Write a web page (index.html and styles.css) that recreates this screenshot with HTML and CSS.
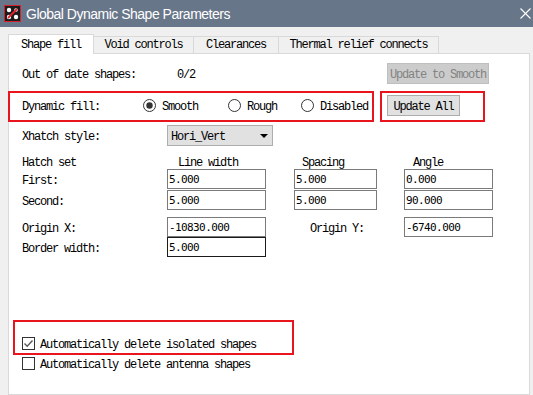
FILE: index.html
```html
<!DOCTYPE html>
<html>
<head>
    <link rel="stylesheet" href="styles.css">
</head>
<body>

    <div class="titlebar">
        <svg class="app-icon" viewBox="0 0 17 17">
            <rect x="0.5" y="0.5" width="16" height="16" fill="#1c1c1c" stroke="#d3202b"/>
            <circle cx="5" cy="5" r="2.2" fill="#fff"/>
            <circle cx="12" cy="5" r="1.8" fill="#fff"/>
            <circle cx="5" cy="12" r="2.2" fill="#fff"/>
            <circle cx="12" cy="12" r="2.2" fill="#fff"/>
            <line x1="4" y1="13" x2="13" y2="4" stroke="#e3222c" stroke-width="1.8"/>
        </svg>
        <span class="title">Global Dynamic Shape Parameters</span>
        <svg class="close" viewBox="0 0 11 11">
            <line x1="0.5" y1="0.5" x2="10.5" y2="10.5" stroke="#fff" stroke-width="1.1"/>
            <line x1="10.5" y1="0.5" x2="0.5" y2="10.5" stroke="#fff" stroke-width="1.1"/>
        </svg>
    </div>

    <div class="tabs">
        <div class="tab active t-shape">Shape fill</div>
        <div class="tab t-void">Void controls</div>
        <div class="tab t-clear">Clearances</div>
        <div class="tab t-thermal">Thermal relief connects</div>
    </div>

    <div class="panel">
        <div class="row row-status">
            <span class="lbl lbl-status">Out of date shapes:</span>
            <span class="lbl count">0/2</span>
            <button class="btn btn-disabled">Update to Smooth</button>
        </div>

        <div class="row row-fill">
            <span class="lbl lbl-fill">Dynamic fill:</span>
            <label class="radio r-smooth">
                <svg class="dot" viewBox="0 0 13 13"><circle cx="6.5" cy="6.5" r="6" fill="#fff" stroke="#333"/><circle cx="6.5" cy="6.5" r="3.2" fill="#333"/></svg>
                <span class="lbl">Smooth</span>
            </label>
            <label class="radio r-rough">
                <svg class="dot" viewBox="0 0 13 13"><circle cx="6.5" cy="6.5" r="6" fill="#fff" stroke="#333"/></svg>
                <span class="lbl">Rough</span>
            </label>
            <label class="radio r-disabled">
                <svg class="dot" viewBox="0 0 13 13"><circle cx="6.5" cy="6.5" r="6" fill="#fff" stroke="#333"/></svg>
                <span class="lbl">Disabled</span>
            </label>
            <button class="btn btn-update">Update All</button>
        </div>

        <div class="row row-xhatch">
            <span class="lbl lbl-xhatch">Xhatch style:</span>
            <div class="select">
                <span class="lbl">Hori_Vert</span>
                <span class="caret"></span>
            </div>
        </div>

        <div class="hrow hrow-head">
            <span class="lbl c0">Hatch set</span>
            <span class="lbl c1 head-lw">Line width</span>
            <span class="lbl c2 head-sp">Spacing</span>
            <span class="lbl c3 head-an">Angle</span>
        </div>
        <div class="hrow hrow-first">
            <span class="lbl c0">First:</span>
            <span class="c1"><input class="field w1" value="5.000"></span>
            <span class="c2"><input class="field w2" value="5.000"></span>
            <span class="c3"><input class="field w3" value="0.000"></span>
        </div>
        <div class="hrow hrow-second">
            <span class="lbl c0">Second:</span>
            <span class="c1"><input class="field w1" value="5.000"></span>
            <span class="c2"><input class="field w2" value="5.000"></span>
            <span class="c3"><input class="field w3" value="90.000"></span>
        </div>
        <div class="hrow hrow-origin">
            <span class="lbl c0">Origin X:</span>
            <span class="c1"><input class="field w1" value="-10830.000"></span>
            <span class="lbl c2 lbl-oy">Origin Y:</span>
            <span class="c3"><input class="field w3" value="-6740.000"></span>
        </div>
        <div class="hrow hrow-border">
            <span class="lbl c0">Border width:</span>
            <span class="c1"><input class="field w1 focused" value="5.000"></span>
        </div>

        <label class="check check-isolated">
            <svg class="box" viewBox="0 0 13 13"><rect x="0.5" y="0.5" width="12" height="12" fill="#fff" stroke="#333"/><polyline points="2.5,6.5 5.2,9.2 10.5,3.5" fill="none" stroke="#5a5a5a" stroke-width="1.4"/></svg>
            <span class="lbl">Automatically delete isolated shapes</span>
        </label>
        <label class="check check-antenna">
            <svg class="box" viewBox="0 0 13 13"><rect x="0.5" y="0.5" width="12" height="12" fill="#fff" stroke="#333"/></svg>
            <span class="lbl">Automatically delete antenna shapes</span>
        </label>

        <div class="mark mark-fill"></div>
        <div class="mark mark-update"></div>
        <div class="mark mark-isolated"></div>
    </div>

</body>
</html>
```

FILE: styles.css
```css
body {
    margin: 0;
    background-color: #f0f0f0;
    font-family: "Liberation Mono", "DejaVu Sans Mono", monospace;
    font-size: 12px;
    letter-spacing: -1.2px;
    color: #000;
    overflow: hidden;
}

.titlebar {
    height: 27px;
    background-color: #687689;
    display: flex;
    align-items: center;
    padding-left: 4px;
}

.app-icon {
    width: 17px;
    height: 17px;
}

.title {
    margin-left: 5px;
    color: #fff;
    font-family: "Liberation Sans", Arial, sans-serif;
    font-size: 14px;
    letter-spacing: -0.5px;
}

.close {
    width: 11px;
    height: 11px;
    margin-left: auto;
    margin-right: 2px;
}

.tabs {
    display: flex;
    align-items: flex-end;
    height: 26px;
    padding-left: 8px;
}

.tab {
    box-sizing: border-box;
    height: 17px;
    line-height: 17px;
    border: 1px solid #d9d9d9;
    border-bottom: none;
    margin-right: -1px;
    text-align: center;
}

.tab.active {
    height: 20px;
    line-height: 20px;
    background-color: #fff;
    margin-bottom: -1px;
    position: relative;
    z-index: 1;
}

.t-shape { width: 86px; }
.t-void { width: 101px; }
.t-clear { width: 86px; }
.t-thermal { width: 161px; }

.panel {
    box-sizing: border-box;
    position: relative;
    width: 522px;
    height: 342px;
    margin-left: 8px;
    padding-left: 13px;
    padding-top: 1px;
    background-color: #fff;
    border: 1px solid #d9d9d9;
}

/* glyphs of the mono face sit high, nudge label text down */
.lbl {
    padding-top: 3px;
    box-sizing: border-box;
}

.row {
    display: flex;
    align-items: center;
    height: 21px;
}

.row-status { margin-top: 8px; }
.row-fill { margin-top: 11px; }
.row-xhatch { margin-top: 9px; }

.lbl-status { width: 155px; }
.count { width: 210px; }
.lbl-fill { width: 121px; }
.lbl-xhatch { width: 145px; }

.btn {
    box-sizing: border-box;
    height: 21px;
    padding: 2px 0 0;
    border: 1px solid #adadad;
    background-color: #e1e1e1;
    font-family: inherit;
    font-size: 12px;
    letter-spacing: -1.2px;
    color: #000;
}

.btn-disabled {
    width: 102px;
    background-color: #cccccc;
    border-color: #bfbfbf;
    color: #838383;
}

.btn-update {
    width: 73px;
}

.radio {
    display: flex;
    align-items: center;
}

.radio .dot {
    width: 13px;
    height: 13px;
    margin-right: 6px;
}

.r-smooth { width: 85px; }
.r-rough { width: 73px; }
.r-disabled { width: 86px; }

.select {
    box-sizing: border-box;
    width: 106px;
    height: 21px;
    padding-left: 3px;
    padding-right: 4px;
    display: flex;
    align-items: center;
    justify-content: space-between;
    background-color: #e1e1e1;
    border: 1px solid #adadad;
}

.caret {
    width: 0;
    height: 0;
    border-left: 4px solid transparent;
    border-right: 4px solid transparent;
    border-top: 4px solid #000;
}

.hrow {
    display: flex;
    align-items: center;
    height: 20px;
}

.hrow-head { height: 14px; margin-top: 8px; }
.hrow-first { margin-top: 1px; }
.hrow-second { margin-top: 1px; }
.hrow-origin { margin-top: 7px; }

.c0 { width: 145px; }
.c1 { width: 127px; display: flex; }
.c2 { width: 110px; display: flex; }
.c3 { width: 89px; display: flex; }

.head-lw { padding-left: 11px; }
.head-sp { padding-left: 8px; }
.head-an { padding-left: 9px; }
.lbl-oy { padding-left: 16px; }

.field {
    box-sizing: border-box;
    height: 20px;
    margin: 0;
    padding: 1px 1px 0;
    border: 1px solid #7a7a7a;
    background-color: #fff;
    font-family: "DejaVu Sans Mono", monospace;
    font-size: 11px;
    letter-spacing: -0.6px;
    color: #000;
    outline: none;
}

.w1 { width: 99px; }
.w2 { width: 83px; }
.w3 { width: 89px; }

.field.focused {
    border-color: #1a1a1a;
}

.check {
    display: flex;
    align-items: center;
    height: 13px;
}

.check .box {
    width: 13px;
    height: 13px;
    margin-right: 5px;
}

.check-isolated { margin-top: 80px; }
.check-antenna { margin-top: 7px; }

.mark {
    position: absolute;
    box-sizing: border-box;
    border: 2px solid #e8151f;
}

.mark-fill { left: -1px; top: 37px; width: 366px; height: 31px; }
.mark-update { left: 371px; top: 37px; width: 105px; height: 31px; }
.mark-isolated { left: 4px; top: 266px; width: 281px; height: 35px; }
```
